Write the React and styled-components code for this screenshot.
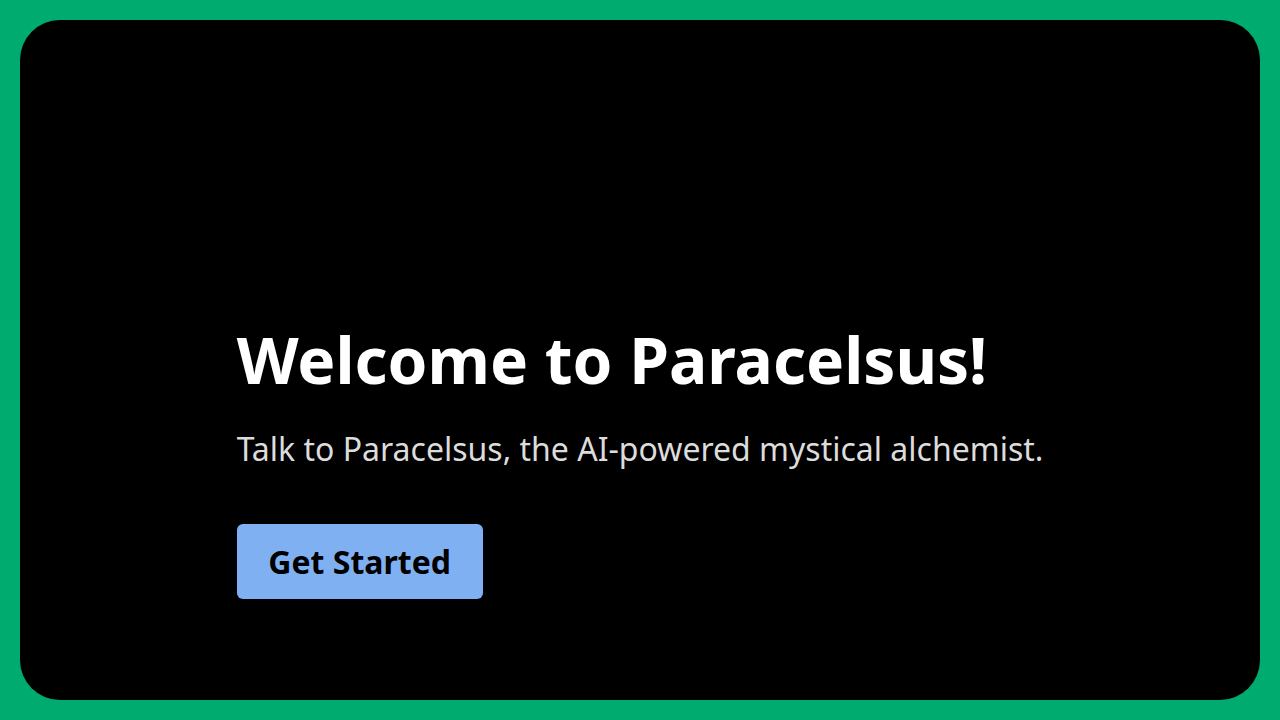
import React from 'react';
import styled, { createGlobalStyle } from 'styled-components';

const GlobalStyle = createGlobalStyle`
    html, body {
        margin: 0;
        padding: 0;
        background: #00ab6f;
    }
    body {
        font-family: "Noto Sans", "Open Sans", sans-serif;
    }
`

const Page = styled.div`
    width: 100%;
    height: 100vh;
    padding: 20px;
    box-sizing: border-box;
    background-color: #00ab6f;
`

const Card = styled.main`
    width: 100%;
    height: 100%;
    box-sizing: border-box;
    border-radius: 40px;
    background-color: #000;

    display: flex;
    flex-direction: column;
    align-items: center;
    justify-content: flex-end;
    padding-bottom: 101px;
`

const Hero = styled.section`
    display: flex;
    flex-direction: column;
    align-items: flex-start;
`

const Title = styled.h1`
    margin: 0;
    font-size: 64px;
    font-weight: 700;
    line-height: 1.2;
    color: #fff;
`

const Subtitle = styled.p`
    margin: 28px 0 0;
    font-size: 32px;
    line-height: 1.4;
    color: #dcdcdc;
`

const Button = styled.button`
    margin-top: 52px;
    width: 246px;
    height: 75px;
    border: none;
    border-radius: 6px;
    background-color: #7fb1f2;
    color: #000;
    font-family: inherit;
    font-size: 32px;
    font-weight: 700;
    cursor: pointer;
`

export default function App() {
    return (
        <>
            <GlobalStyle />
            <Page>
                <Card>
                    <Hero>
                        <Title>Welcome to Paracelsus!</Title>
                        <Subtitle>Talk to Paracelsus, the AI-powered mystical alchemist.</Subtitle>
                        <Button>Get Started</Button>
                    </Hero>
                </Card>
            </Page>
        </>
    );
}
